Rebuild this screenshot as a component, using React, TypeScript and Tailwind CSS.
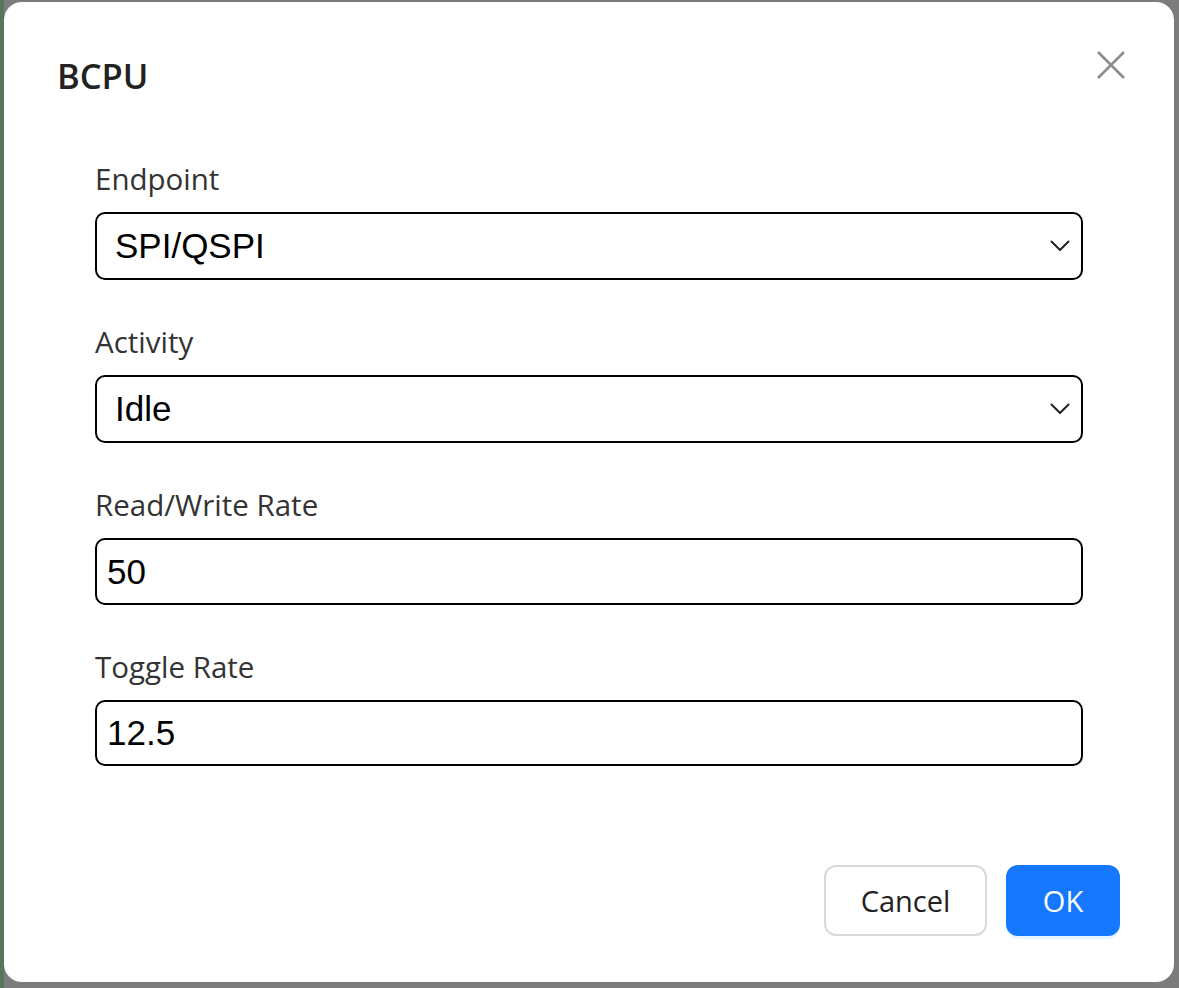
import React, { useState } from 'react';

const ui = { fontFamily: '"Open Sans", "Noto Sans", sans-serif' };
const arial = { fontFamily: '"Liberation Sans", Arial, sans-serif' };

const Chevron: React.FC = () => (
  <svg width="20" height="12" viewBox="0 0 20 12" fill="none" className="shrink-0">
    <path d="M1.5 1.5 L10 10 L18.5 1.5" stroke="#222" strokeWidth="2" strokeLinecap="round" strokeLinejoin="round" />
  </svg>
);

interface FieldProps {
  label: string;
  children: React.ReactNode;
}

const Field: React.FC<FieldProps> = ({ label, children }) => (
  <div className="flex flex-col">
    <label className="text-[29.5px] leading-[36px] text-[#333] mb-[15px]" style={ui}>{label}</label>
    {children}
  </div>
);

const App: React.FC = () => {
  const [endpoint, setEndpoint] = useState('SPI/QSPI');
  const [activity, setActivity] = useState('Idle');
  const [rwRate, setRwRate] = useState('50');
  const [toggleRate, setToggleRate] = useState('12.5');

  return (
    <div className="w-[1179px] h-[988px] bg-[#7c7c7c] flex overflow-hidden">
      <div className="w-[4px] h-full bg-[#56785a]" />
      <div className="mt-[2px] w-[1170px] h-[980px] bg-white rounded-[18px] flex flex-col pl-[53px] pr-[47px]">
        <div className="flex items-start justify-between pt-[49px]">
          <h1 className="text-[34.5px] leading-[50px] font-semibold text-[#222]" style={ui}>BCPU</h1>
          <button className="w-[40px] h-[40px] flex items-center justify-center mt-[-6px] mr-[-4px]">
            <svg width="30" height="30" viewBox="0 0 30 30">
              <path d="M2 2 L28 28 M28 2 L2 28" stroke="#8c8c8c" strokeWidth="2.6" />
            </svg>
          </button>
        </div>

        <div className="flex flex-col gap-[44px] pl-[38px] pr-[44px] mt-[60px]">
          <Field label="Endpoint">
            <div className="h-[68px] border-2 border-black rounded-[10px] flex items-center justify-between pl-[18px] pr-[11px]">
              <span className="text-[35px] text-black" style={arial}>{endpoint}</span>
              <Chevron />
            </div>
          </Field>
          <Field label="Activity">
            <div className="h-[68px] border-2 border-black rounded-[10px] flex items-center justify-between pl-[18px] pr-[11px]">
              <span className="text-[35px] text-black" style={arial}>{activity}</span>
              <Chevron />
            </div>
          </Field>
          <Field label="Read/Write Rate">
            <input
              value={rwRate}
              onChange={e => setRwRate(e.target.value)}
              className="h-[67px] border-2 border-black rounded-[10px] px-[10px] text-[35px] text-black outline-none"
              style={arial}
            />
          </Field>
          <Field label="Toggle Rate">
            <input
              value={toggleRate}
              onChange={e => setToggleRate(e.target.value)}
              className="h-[66px] border-2 border-black rounded-[10px] px-[10px] text-[35px] text-black outline-none"
              style={arial}
            />
          </Field>
        </div>

        <div className="flex justify-end gap-[19px] mt-auto mb-[46px] pr-[7px]">
          <button
            onClick={() => { setEndpoint('SPI/QSPI'); setActivity('Idle'); }}
            className="w-[163px] h-[71px] border-2 border-[#d9d9d9] rounded-[12px] text-[29px] text-[#222] bg-white"
            style={ui}
          >
            Cancel
          </button>
          <button
            className="w-[114px] h-[71px] rounded-[12px] text-[29px] text-white bg-[#1677ff] shadow-[0_3px_0_rgba(5,145,255,0.1)]"
            style={ui}
          >
            OK
          </button>
        </div>
      </div>
    </div>
  );
};

export default App;
